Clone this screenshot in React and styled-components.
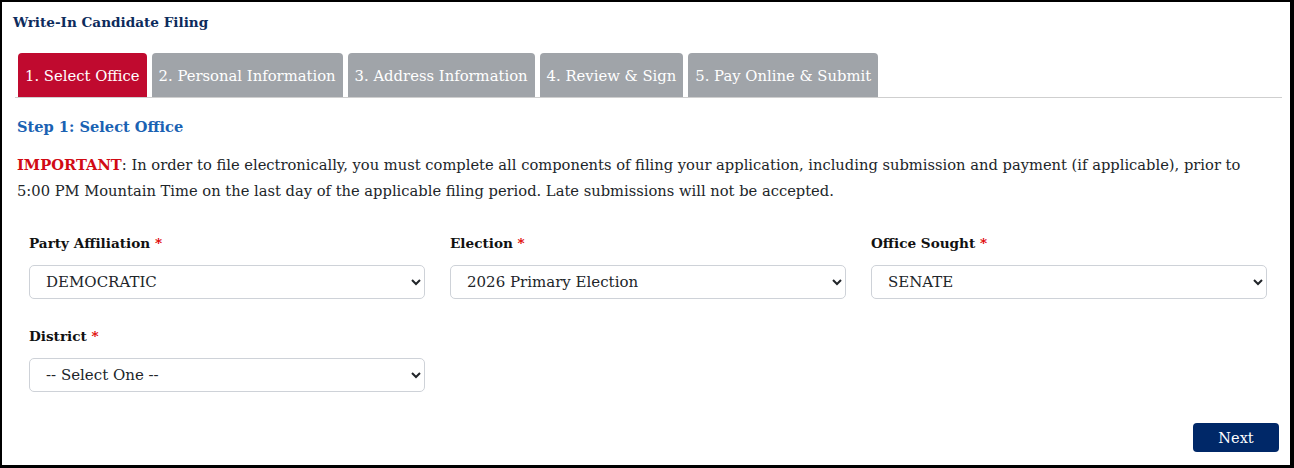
import React from 'react';
import styled, { createGlobalStyle } from 'styled-components';

const GlobalStyle = createGlobalStyle`
  html, body {
    margin: 0;
    padding: 0;
    background: #ffffff;
  }
  body {
    font-family: "DejaVu Serif", Georgia, serif;
  }
`;

const Frame = styled.div`
  box-sizing: border-box;
  width: 1294px;
  height: 468px;
  border-style: solid;
  border-color: #000;
  border-width: 2px 4px 3px 2px;
  padding: 12px 8px 0 11px;
  display: flex;
  flex-direction: column;
`;

const Title = styled.h1`
  margin: 0 0 23px 0;
  font-size: 13.6px;
  line-height: 16px;
  font-weight: bold;
  color: #0d2b5c;
`;

const TabBar = styled.div`
  display: flex;
  gap: 5px;
  padding-left: 3px;
  margin-left: 2px;
  border-bottom: 1px solid #cfcfcf;
`;

const Tab = styled.div`
  height: 44px;
  display: flex;
  align-items: center;
  padding: 0 7px;
  font-size: 14.8px;
  color: #fff;
  background: ${p => (p.$active ? '#c00a2f' : '#a0a4a9')};
  border-radius: 4px 4px 0 0;
  white-space: nowrap;
`;

const StepHeading = styled.h2`
  margin: 19px 0 0 4px;
  font-size: 14.6px;
  line-height: 20px;
  font-weight: bold;
  color: #1a62b3;
`;

const Notice = styled.p`
  max-width: 1240px;
  margin: 15px 0 0 4px;
  font-size: 14.7px;
  line-height: 26px;
  color: #212529;
`;

const Important = styled.span`
  color: #d10a14;
  font-weight: bold;
`;

const FieldGrid = styled.div`
  display: grid;
  grid-template-columns: repeat(3, 396px);
  column-gap: 25px;
  row-gap: 28px;
  margin: 30px 0 0 16px;
`;

const Field = styled.div`
  display: flex;
  flex-direction: column;
  gap: 13px;
`;

const Label = styled.label`
  font-size: 13.6px;
  line-height: 18px;
  font-weight: bold;
  color: #111;
`;

const Req = styled.span`
  color: #e00000;
`;

const Select = styled.select`
  box-sizing: border-box;
  width: 100%;
  height: 34px;
  padding: 0 8px 0 12px;
  border: 1px solid #ced2d8;
  border-radius: 5px;
  background: #fff;
  font-family: "DejaVu Serif", Georgia, serif;
  font-size: 15px;
  color: #212529;
`;

const Footer = styled.div`
  display: flex;
  justify-content: flex-end;
  margin-top: 31px;
  padding-right: 3px;
`;

const NextButton = styled.button`
  width: 86px;
  height: 29px;
  border: none;
  border-radius: 4px;
  background: #002868;
  color: #fff;
  font-family: "DejaVu Serif", Georgia, serif;
  font-size: 14.5px;
`;

const tabs = [
  '1. Select Office',
  '2. Personal Information',
  '3. Address Information',
  '4. Review & Sign',
  '5. Pay Online & Submit',
];

const fields = [
  { label: 'Party Affiliation', value: 'DEMOCRATIC' },
  { label: 'Election', value: '2026 Primary Election' },
  { label: 'Office Sought', value: 'SENATE' },
  { label: 'District', value: '-- Select One --' },
];

export default function App() {
  return (
    <>
      <GlobalStyle />
      <Frame>
        <Title>Write-In Candidate Filing</Title>
        <TabBar>
          {tabs.map((t, i) => (
            <Tab key={t} $active={i === 0}>{t}</Tab>
          ))}
        </TabBar>
        <StepHeading>Step 1: Select Office</StepHeading>
        <Notice>
          <Important>IMPORTANT</Important>: In order to file electronically, you must complete all
          components of filing your application, including submission and payment (if applicable),
          prior to 5:00 PM Mountain Time on the last day of the applicable filing period. Late
          submissions will not be accepted.
        </Notice>
        <FieldGrid>
          {fields.map(f => (
            <Field key={f.label}>
              <Label>
                {f.label} <Req>*</Req>
              </Label>
              <Select defaultValue={f.value}>
                <option>{f.value}</option>
              </Select>
            </Field>
          ))}
        </FieldGrid>
        <Footer>
          <NextButton>Next</NextButton>
        </Footer>
      </Frame>
    </>
  );
}
